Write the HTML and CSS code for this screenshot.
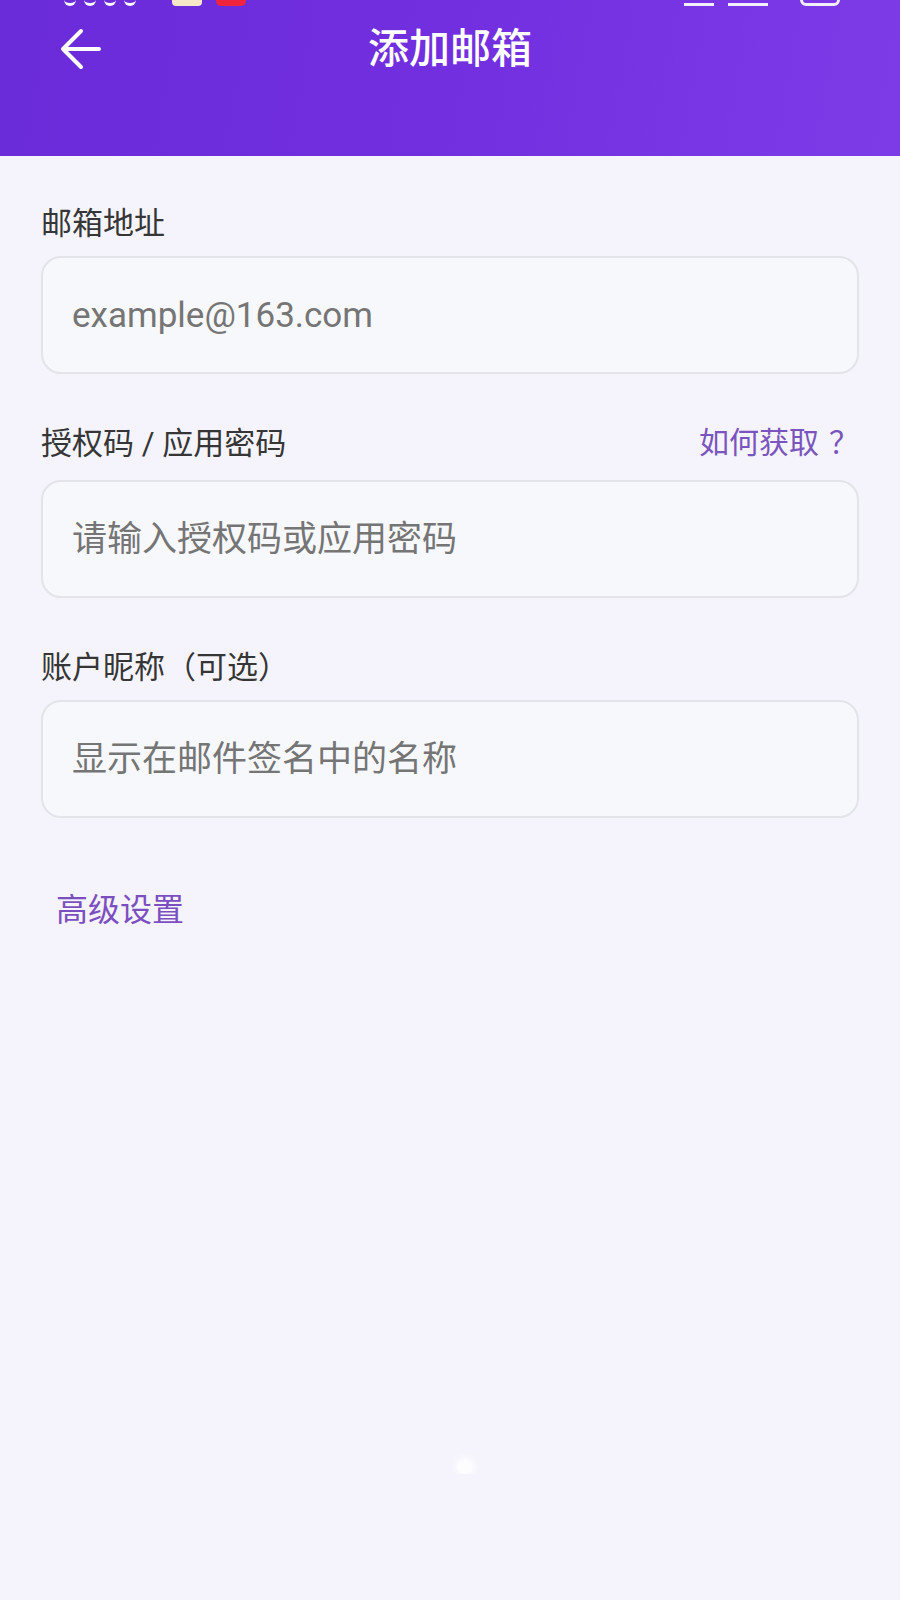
FILE: index.html
```html
<!DOCTYPE html>
<html lang="zh-CN">
<head>
    <meta charset="UTF-8">
    <meta name="viewport" content="width=device-width, initial-scale=1.0">
    <title>添加邮箱</title>
    <link rel="stylesheet" href="styles.css">
</head>
<body>
    <header class="app-header">
        <!-- status bar, only its lower edge shows in the shot -->
        <div class="status-bar">
            <div class="status-left">
                <span class="status-digit"></span>
                <span class="status-digit"></span>
                <span class="status-digit"></span>
                <span class="status-digit"></span>
                <span class="status-badge"></span>
                <span class="status-red"></span>
            </div>
            <div class="status-right">
                <span class="status-icon"></span>
                <span class="status-icon wide"></span>
                <span class="status-battery"></span>
            </div>
        </div>

        <div class="toolbar">
            <button class="back-btn" aria-label="返回">
                <svg width="44" height="44" viewBox="0 0 44 44">
                    <path d="M23 4 L5 22 L23 40 M5 22 L41 22" fill="none" stroke="#fff" stroke-width="4" stroke-linecap="round" stroke-linejoin="round"/>
                </svg>
            </button>
            <h1 class="title">添加邮箱</h1>
        </div>
    </header>

    <main class="form-area">
        <div class="field">
            <div class="field-head">
                <label for="email">邮箱地址</label>
            </div>
            <input class="text-input" type="text" id="email" placeholder="example@163.com">
        </div>

        <div class="field with-link">
            <div class="field-head">
                <label for="auth-code">授权码 / 应用密码</label>
                <a class="help-link" href="#">如何获取<span class="qmark">？</span></a>
            </div>
            <input class="text-input" type="text" id="auth-code" placeholder="请输入授权码或应用密码">
        </div>

        <div class="field">
            <div class="field-head">
                <label for="nickname">账户昵称（可选）</label>
            </div>
            <input class="text-input" type="text" id="nickname" placeholder="显示在邮件签名中的名称">
        </div>

        <button class="advanced-btn">高级设置</button>

        <div class="page-dot"></div>
    </main>
</body>
</html>
```

FILE: styles.css
```css
* {
    box-sizing: border-box;
}

body {
    margin: 0;
    background: #f5f4fc;
    font-family: Roboto, "Noto Sans CJK SC", sans-serif;
    color: #333;
}

.app-header {
    height: 156px;
    background: linear-gradient(100deg, #6a2bd9 0%, #722fdf 50%, #7d3be8 100%);
    color: #fff;
}

.status-bar {
    height: 6px;
    overflow: hidden;
    display: flex;
    justify-content: space-between;
    align-items: flex-end;
    padding: 0 60px 0 64px;
}

.status-left,
.status-right {
    display: flex;
    align-items: flex-end;
    gap: 8px;
}

.status-right {
    gap: 14px;
}

.status-digit {
    width: 12px;
    height: 20px;
    border-bottom: 3px solid #fff;
    border-radius: 0 0 6px 6px;
}

.status-badge {
    width: 30px;
    height: 20px;
    background: #f6e7c8;
    border-radius: 4px;
    margin-left: 28px;
}

.status-red {
    width: 30px;
    height: 30px;
    background: #f0243c;
    border-radius: 5px;
    margin-left: 6px;
}

.status-icon {
    width: 30px;
    height: 20px;
    border-bottom: 3px solid #f2eefc;
}

.status-icon.wide {
    width: 40px;
}

.status-battery {
    width: 40px;
    height: 20px;
    border: 3px solid #f2eefc;
    border-radius: 6px;
    margin-left: 18px;
}

.toolbar {
    height: 86px;
    display: grid;
    grid-template-columns: 120px 1fr 120px;
    align-items: center;
}

.back-btn {
    background: none;
    border: none;
    padding: 0;
    margin-left: 58px;
    width: 44px;
    height: 44px;
    cursor: pointer;
    display: flex;
}

.title {
    margin: 0;
    text-align: center;
    font-size: 41px;
    font-weight: 500;
    line-height: 48px;
}

.form-area {
    padding: 42px 41px 0;
    display: flex;
    flex-direction: column;
}

.field {
    display: flex;
    flex-direction: column;
    margin-bottom: 44px;
}

.field-head {
    display: flex;
    justify-content: space-between;
    align-items: center;
    height: 44px;
    margin-bottom: 14px;
}

.with-link .field-head {
    margin-bottom: 18px;
}

.field-head label {
    font-size: 31px;
    color: #363636;
}

.help-link {
    font-family: "Noto Sans CJK SC", sans-serif;
    font-size: 30px;
    color: #7a55bd;
    text-decoration: none;
    margin-right: 0;
}

.qmark {
    font-family: "Noto Sans CJK TC", sans-serif;
    margin-left: 10px;
}

.text-input {
    width: 100%;
    height: 118px;
    padding: 0 29px;
    background: #f7f8fb;
    border: 2px solid #e3e3ea;
    border-radius: 20px;
    font-family: Roboto, "Noto Sans CJK SC", sans-serif;
    font-size: 35px;
    color: #333;
    outline: none;
}

.text-input::placeholder {
    color: #757575;
}

.advanced-btn {
    align-self: flex-start;
    background: none;
    border: none;
    padding: 0 15px;
    margin-top: 22px;
    height: 44px;
    font-family: Roboto, "Noto Sans CJK SC", sans-serif;
    font-size: 32px;
    color: #7c4fc0;
    cursor: pointer;
}

.page-dot {
    align-self: center;
    width: 14px;
    height: 14px;
    margin: 532px 0 0 30px;
    border-radius: 50%;
    background: #fdfdff;
    box-shadow: 0 0 6px 3px rgba(255, 255, 255, 0.8);
}
```
